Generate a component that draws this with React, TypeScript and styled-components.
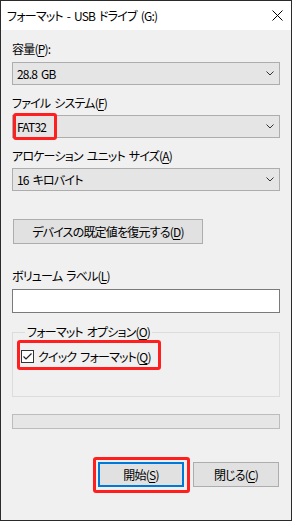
import React from "react";
import styled, { createGlobalStyle } from "styled-components";

const GlobalStyle = createGlobalStyle`
  html, body {
    margin: 0;
    padding: 0;
    background: #f0f0f0;
  }
  body {
    font-family: "Noto Sans CJK JP", "Noto Sans", sans-serif;
    font-size: 12px;
    font-feature-settings: "palt";
    letter-spacing: -0.8px;
    word-spacing: 2px;
    color: #000;
  }
`;

const Window = styled.div`
  box-sizing: border-box;
  width: 292px;
  height: 521px;
  border: 1px solid #2b2b2b;
  background: #f0f0f0;
  display: flex;
  flex-direction: column;
`;

const TitleBar = styled.div`
  height: 29px;
  background: #fff;
  display: flex;
  align-items: center;
  justify-content: space-between;
  padding: 0 8px 0 6px;
  font-size: 12px;
`;

const CloseIcon = () => (
  <svg width="11" height="11" viewBox="0 0 11 11">
    <path d="M0.5 0.5 L10.5 10.5 M10.5 0.5 L0.5 10.5" stroke="#000" strokeWidth="1" />
  </svg>
);

const Body = styled.div`
  flex: 1;
  padding: 11px 11px 0 11px;
  display: flex;
  flex-direction: column;
`;

const Label = styled.div<{ $gap?: number }>`
  height: 16px;
  line-height: 16px;
  margin-bottom: ${(p) => p.$gap ?? 4}px;
  white-space: nowrap;
`;

const Key = styled.span`
  text-decoration: underline;
  text-underline-offset: 2px;
`;

const Field = styled.div`
  margin-bottom: 10px;
`;

const Select = styled.div`
  position: relative;
  box-sizing: border-box;
  height: 23px;
  border: 1px solid #adadad;
  background: #e5e5e5;
  display: flex;
  align-items: center;
  justify-content: space-between;
  padding: 0 5px 0 4px;
`;

const Chevron = () => (
  <svg width="8" height="5" viewBox="0 0 8 5">
    <path d="M0.5 0.5 L4 4 L7.5 0.5" stroke="#333" strokeWidth="1" fill="none" />
  </svg>
);

const Highlight = styled.div`
  position: absolute;
  box-sizing: border-box;
  border: 3px solid #ff1f1f;
  border-radius: 3px;
  pointer-events: none;
`;

const Button = styled.div<{ $default?: boolean }>`
  position: relative;
  box-sizing: border-box;
  height: 25px;
  background: #e1e1e1;
  border: ${(p) => (p.$default ? "2px solid #0078d7" : "1px solid #adadad")};
  display: flex;
  align-items: center;
  justify-content: center;
  white-space: nowrap;
`;

const ResetButton = styled(Button)`
  width: 190px;
  margin: 18px 0 0 1px;
`;

const TextInput = styled.div`
  box-sizing: border-box;
  height: 24px;
  background: #fff;
  border: 1px solid #7a7a7a;
`;

const GroupBox = styled.fieldset`
  box-sizing: border-box;
  margin: 12px 0 0 0;
  padding: 9px 0 0 8px;
  height: 72px;
  border: 1px solid #dcdcdc;
  border-radius: 0;
`;

const Legend = styled.legend`
  padding: 0 2px;
  margin-left: 4px;
  line-height: 14px;
`;

const CheckRow = styled.div`
  position: relative;
  display: inline-flex;
  align-items: center;
  gap: 4px;
  height: 16px;
`;

const CheckBox = styled.div`
  box-sizing: border-box;
  width: 13px;
  height: 13px;
  border: 1px solid #333;
  background: #fff;
  display: flex;
  align-items: center;
  justify-content: center;
`;

const Progress = styled.div`
  box-sizing: border-box;
  height: 15px;
  margin-top: 17px;
  background: #e6e6e6;
  border: 1px solid #bcbcbc;
`;

const ButtonRow = styled.div`
  display: flex;
  justify-content: flex-end;
  gap: 9px;
  margin-top: 33px;
  padding-right: 1px;
`;

const DialogButton = styled(Button)`
  width: 86px;
`;

export default function App() {
  return (
    <>
      <GlobalStyle />
      <Window>
        <TitleBar>
          <span>フォーマット - USB ドライブ (G:)</span>
          <CloseIcon />
        </TitleBar>
        <Body>
          <Field>
            <Label $gap={5}>
              容量(<Key>P</Key>):
            </Label>
            <Select>
              <span>28.8 GB</span>
              <Chevron />
            </Select>
          </Field>
          <Field>
            <Label $gap={4}>
              ファイル システム(<Key>F</Key>)
            </Label>
            <Select>
              <span>FAT32</span>
              <Chevron />
              <Highlight style={{ left: 0, top: -3, width: 44, height: 27 }} />
            </Select>
          </Field>
          <Field>
            <Label $gap={4}>
              アロケーション ユニット サイズ(<Key>A</Key>)
            </Label>
            <Select>
              <span>16 キロバイト</span>
              <Chevron />
            </Select>
          </Field>
          <ResetButton>
            デバイスの既定値を復元する(<Key>D</Key>)
          </ResetButton>
          <Label $gap={5} style={{ marginTop: 24 }}>
            ボリューム ラベル(<Key>L</Key>)
          </Label>
          <TextInput />
          <GroupBox>
            <Legend>
              フォーマット オプション(<Key>O</Key>)
            </Legend>
            <CheckRow>
              <CheckBox>
                <svg width="11" height="11" viewBox="0 0 11 11">
                  <path d="M1.5 5.5 L4 8 L9.5 2.5" stroke="#222" strokeWidth="1.2" fill="none" />
                </svg>
              </CheckBox>
              <span>
                クイック フォーマット(<Key>Q</Key>)
              </span>
              <Highlight style={{ left: -4, top: -9, right: -10, height: 30 }} />
            </CheckRow>
          </GroupBox>
          <Progress />
          <ButtonRow>
            <DialogButton $default>
              開始(<Key>S</Key>)
              <Highlight style={{ left: -7, top: -7, width: 97, height: 36 }} />
            </DialogButton>
            <DialogButton>
              閉じる(<Key>C</Key>)
            </DialogButton>
          </ButtonRow>
        </Body>
      </Window>
    </>
  );
}
